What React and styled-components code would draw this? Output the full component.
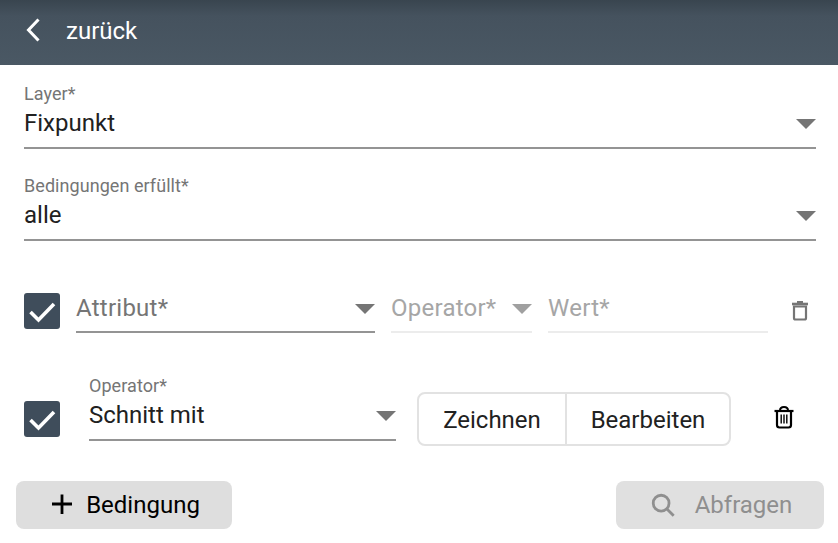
import React from "react";
import styled, { createGlobalStyle } from "styled-components";

const GlobalStyle = createGlobalStyle`
  html, body {
    margin: 0;
    padding: 0;
    background: #fff;
    font-family: Roboto, "Liberation Sans", sans-serif;
  }
`;

const Page = styled.div`
  width: 838px;
  height: 543px;
  overflow: hidden;
  display: flex;
  flex-direction: column;
`;

const Header = styled.header`
  height: 65px;
  flex: none;
  display: flex;
  align-items: center;
  padding-left: 24px;
  color: #fff;
  background: linear-gradient(#39454f 0, #45525e 16px, #4a5864 100%);
`;

const BackTitle = styled.span`
  margin-left: 22px;
  margin-bottom: 3px;
  font-size: 24px;
  line-height: 28px;
`;

const Main = styled.main`
  display: flex;
  flex-direction: column;
  padding: 20px 22px 35px 24px;
`;

const Field = styled.div`
  display: flex;
  flex-direction: column;
  margin-bottom: ${(p) => p.$gap || 0}px;
`;

const Label = styled.label`
  display: block;
  font-size: 18px;
  line-height: 18px;
  letter-spacing: 0.06px;
  color: #757575;
`;

const Control = styled.div`
  display: flex;
  align-items: center;
  justify-content: space-between;
  box-sizing: border-box;
  height: ${(p) => (p.$compact ? 40 : 46)}px;
  padding-bottom: ${(p) => (p.$compact ? 9 : 4)}px;
  border-bottom: 2px solid ${(p) => (p.$disabled ? "#ececec" : "#949494")};
  font-size: 24px;
  letter-spacing: ${(p) => (p.$compact ? 0.25 : 0)}px;
  color: ${(p) => (p.$disabled ? "#a6a6a6" : p.$compact ? "#757575" : "#212121")};
`;

const Arrow = styled.span`
  flex: none;
  width: 0;
  height: 0;
  margin-top: 2px;
  border-left: 10px solid transparent;
  border-right: 10px solid transparent;
  border-top: 10px solid ${(p) => (p.$disabled ? "#a0a0a0" : "#757575")};
`;

const Row = styled.div`
  display: flex;
  align-items: flex-start;
  margin-top: ${(p) => p.$top || 0}px;
`;

const CheckBox = styled.span`
  flex: none;
  width: 36px;
  height: 36px;
  margin-top: ${(p) => p.$top || 0}px;
  border-radius: 3px;
  background: #3f4d5b;
  display: flex;
  align-items: center;
  justify-content: center;
`;

const Slot = styled.div`
  flex: none;
  width: ${(p) => p.$width}px;
  margin-left: ${(p) => p.$left}px;
`;

const IconSlot = styled.span`
  flex: none;
  display: flex;
  margin-left: ${(p) => p.$left || 0}px;
  margin-top: ${(p) => p.$top || 0}px;
`;

const ButtonGroup = styled.div`
  flex: none;
  display: flex;
  width: 314px;
  height: 54px;
  box-sizing: border-box;
  margin: 15px 0 0 21px;
  border: 2px solid #e2e2e2;
  border-radius: 8px;
`;

const GroupButton = styled.button`
  flex: ${(p) => p.$flex};
  padding: 2px 0 0;
  border: 0;
  border-left: ${(p) => (p.$divider ? "2px solid #e2e2e2" : "0")};
  background: transparent;
  font: 400 24px Roboto, sans-serif;
  color: #212121;
`;

const Footer = styled.div`
  display: flex;
  justify-content: space-between;
  padding: 0 14px 0 16px;
`;

const ActionButton = styled.button`
  width: ${(p) => p.$width}px;
  height: 48px;
  padding: 0 0 0 2px;
  border: 0;
  border-radius: 8px;
  display: flex;
  align-items: center;
  justify-content: center;
  gap: ${(p) => p.$gap}px;
  background: ${(p) => (p.disabled ? "#e0e0e0" : "#dedede")};
  color: ${(p) => (p.disabled ? "#8f8f8f" : "#000")};
  font: 400 24px Roboto, sans-serif;
`;

const Chevron = () => (
  <svg width="20" height="24" viewBox="0 0 20 24">
    <path d="M14.5 1.5 L4.5 12 L14.5 22.5" fill="none" stroke="#fff" strokeWidth="3" />
  </svg>
);

const Check = () => (
  <svg width="30" height="24" viewBox="0 0 30 24">
    <path d="M3.5 13 L11.5 21 L27 5" fill="none" stroke="#fff" strokeWidth="3.6" />
  </svg>
);

const TrashOutline = () => (
  <svg width="24" height="24" viewBox="0 0 24 24" fill="none" stroke="#757575">
    <path d="M6 19V7.5h12V19a1.5 1.5 0 0 1-1.5 1.5h-9A1.5 1.5 0 0 1 6 19z" strokeWidth="2.2" />
    <path d="M4 5h16" strokeWidth="2.6" />
    <path d="M9 3h6" strokeWidth="2" />
  </svg>
);

const TrashBars = () => (
  <svg width="24" height="24" viewBox="0 0 24 24" fill="none" stroke="#000">
    <path d="M5 6.5V20a2.5 2.5 0 0 0 2.5 2.5h9A2.5 2.5 0 0 0 19 20V6.5" strokeWidth="2.2" />
    <path d="M2.5 6h19" strokeWidth="2.2" />
    <path d="M8 5.5C8 3 9.5 2 12 2s4 1 4 3.5" strokeWidth="2" />
    <path d="M9.2 9.5v9M12 9.5v9M14.8 9.5v9" strokeWidth="1.4" />
  </svg>
);

const Plus = () => (
  <svg width="24" height="24" viewBox="0 0 24 24">
    <path d="M12 1.5v19.5M2 11h20" stroke="#000" strokeWidth="2.8" fill="none" />
  </svg>
);

const Search = () => (
  <svg width="26" height="26" viewBox="0 0 28 28" fill="none" stroke="#8f8f8f" strokeWidth="3">
    <circle cx="12" cy="12" r="8.5" />
    <path d="M18 18l7.5 7.5" />
  </svg>
);

export default function App() {
  return (
    <Page>
      <GlobalStyle />
      <Header>
        <IconSlot $top={-5}>
          <Chevron />
        </IconSlot>
        <BackTitle>zurück</BackTitle>
      </Header>
      <Main>
        <Field $gap={28}>
          <Label>Layer*</Label>
          <Control>
            Fixpunkt
            <Arrow />
          </Control>
        </Field>
        <Field $gap={52}>
          <Label>Bedingungen erfüllt*</Label>
          <Control>
            alle
            <Arrow />
          </Control>
        </Field>
        <Row>
          <CheckBox>
            <Check />
          </CheckBox>
          <Slot $width={299} $left={16}>
            <Control $compact>
              Attribut*
              <Arrow />
            </Control>
          </Slot>
          <Slot $width={141} $left={16}>
            <Control $compact $disabled>
              Operator*
              <Arrow $disabled />
            </Control>
          </Slot>
          <Slot $width={220} $left={16}>
            <Control $compact $disabled>
              Wert*
            </Control>
          </Slot>
          <IconSlot $left={20} $top={6}>
            <TrashOutline />
          </IconSlot>
        </Row>
        <Row $top={44}>
          <CheckBox $top={24}>
            <Check />
          </CheckBox>
          <Slot $width={307} $left={29}>
            <Label>Operator*</Label>
            <Control>
              Schnitt mit
              <Arrow />
            </Control>
          </Slot>
          <ButtonGroup>
            <GroupButton $flex="0 0 146px">Zeichnen</GroupButton>
            <GroupButton $flex="1" $divider>Bearbeiten</GroupButton>
          </ButtonGroup>
          <IconSlot $left={41} $top={28}>
            <TrashBars />
          </IconSlot>
        </Row>
      </Main>
      <Footer>
        <ActionButton $width={216} $gap={12}>
          <Plus />
          Bedingung
        </ActionButton>
        <ActionButton $width={208} $gap={19} disabled>
          <Search />
          Abfragen
        </ActionButton>
      </Footer>
    </Page>
  );
}
